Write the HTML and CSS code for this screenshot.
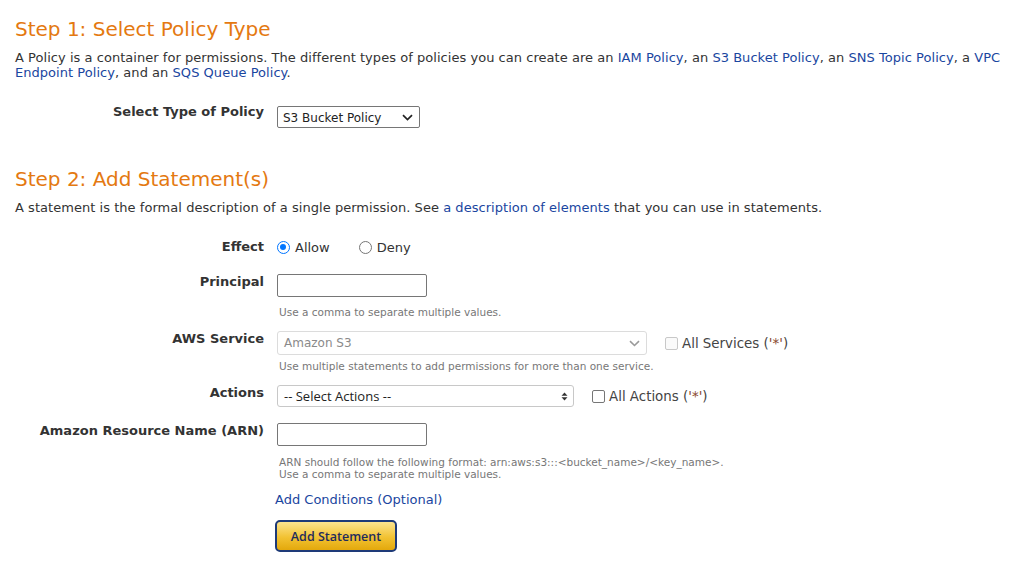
FILE: index.html
```html
<!DOCTYPE html>
<html>
<head>
<meta charset="utf-8">
<link rel="stylesheet" href="styles.css">
</head>
<body>
<div class="page">
  <h2 class="step">Step 1: Select Policy Type</h2>
  <p class="intro">A Policy is a container for permissions. The different types of policies you can create are an <a href="#">IAM Policy</a>, an <a href="#">S3 Bucket Policy</a>, an <a href="#">SNS Topic Policy</a>, a <a href="#">VPC Endpoint Policy</a>, and an <a href="#">SQS Queue Policy</a>.</p>

  <div class="row row-type">
    <div class="label">Select Type of Policy</div>
    <div class="control">
      <div class="select select-type">
        <span class="sel-text">S3 Bucket Policy</span>
        <svg class="chev" width="11" height="7" viewBox="0 0 11 7"><path d="M1 1.2 L5.5 5.5 L10 1.2" fill="none" stroke="#222" stroke-width="1.7"/></svg>
      </div>
    </div>
  </div>

  <h2 class="step step2">Step 2: Add Statement(s)</h2>
  <p class="intro">A statement is the formal description of a single permission. See <a href="#">a description of elements</a> that you can use in statements.</p>

  <div class="form">
    <div class="row row-effect">
      <div class="label">Effect</div>
      <div class="control radios">
        <label class="radio"><span class="rb checked"></span>Allow</label>
        <label class="radio"><span class="rb"></span>Deny</label>
      </div>
    </div>

    <div class="row row-principal">
      <div class="label">Principal</div>
      <div class="control">
        <div class="input"></div>
        <div class="help">Use a comma to separate multiple values.</div>
      </div>
    </div>

    <div class="row row-service">
      <div class="label">AWS Service</div>
      <div class="control">
        <div class="line">
          <div class="select select-service">
            <span class="sel-text">Amazon S3</span>
            <svg class="chev" width="11" height="7" viewBox="0 0 11 7"><path d="M1 1.2 L5.5 5.5 L10 1.2" fill="none" stroke="#9a9a9a" stroke-width="1.6"/></svg>
          </div>
          <label class="check disabled"><span class="cb"></span>All Services (<span class="q">'*'</span>)</label>
        </div>
        <div class="help">Use multiple statements to add permissions for more than one service.</div>
      </div>
    </div>

    <div class="row row-actions">
      <div class="label">Actions</div>
      <div class="control">
        <div class="line">
          <div class="select select-actions">
            <span class="sel-text">-- Select Actions --</span>
            <svg class="updown" width="7" height="9" viewBox="0 0 7 9"><path d="M3.5 0.5 L6.5 3.8 L0.5 3.8 Z M3.5 8.5 L6.5 5.2 L0.5 5.2 Z" fill="#333"/></svg>
          </div>
          <label class="check"><span class="cb"></span>All Actions (<span class="q">'*'</span>)</label>
        </div>
      </div>
    </div>

    <div class="row row-arn">
      <div class="label">Amazon Resource Name (ARN)</div>
      <div class="control">
        <div class="input"></div>
        <div class="help help-arn">ARN should follow the following format: arn:aws:s3:::&lt;bucket_name&gt;/&lt;key_name&gt;.<br>Use a comma to separate multiple values.</div>
      </div>
    </div>

    <div class="row row-cond">
      <div class="label"></div>
      <div class="control control-wide">
        <a href="#" class="cond">Add Conditions (Optional)</a>
        <button class="btn">Add Statement</button>
      </div>
    </div>
  </div>
</div>
</body>
</html>
```

FILE: styles.css
```css
html, body {
  margin: 0;
  padding: 0;
  background: #fff;
}
body {
  font-family: "DejaVu Sans", Verdana, sans-serif;
  font-size: 13px;
  color: #333;
}
.page {
  padding: 14px 15px 0 15px;
}
a {
  color: #1a46a0;
  text-decoration: none;
}
.step {
  margin: 0;
  font-weight: normal;
  font-size: 20px;
  line-height: 30px;
  color: #e47911;
}
.step2 {
  margin-top: 36px;
}
.intro {
  margin: 6px 0 0 0;
  line-height: 15px;
  letter-spacing: 0.04px;
}
.row {
  display: grid;
  grid-template-columns: 249px auto;
  column-gap: 13px;
}
.label {
  text-align: right;
  font-weight: bold;
  line-height: 16px;
}
.row-type {
  margin-top: 24px;
}
.select {
  position: relative;
  box-sizing: border-box;
  display: flex;
  align-items: center;
  height: 22px;
  border: 1px solid #767676;
  border-radius: 2px;
  padding: 0 6px 0 5px;
  font-size: 12px;
}
.sel-text {
  flex: 1;
  white-space: nowrap;
}
.select-type {
  width: 143px;
  height: 22px;
  margin-top: 2px;
}
.select-type .sel-text {
  color: #222;
  padding-top: 2px;
}
.form {
  margin-top: 23px;
}
.row-effect .label {
  line-height: 18px;
}
.radios {
  display: flex;
  align-items: center;
  height: 18px;
}
.radio {
  display: flex;
  align-items: center;
  margin-right: 29px;
}
.rb {
  box-sizing: border-box;
  width: 13px;
  height: 13px;
  border-radius: 50%;
  border: 1px solid #767676;
  margin: 0 5px 0 0;
  background: #fff;
  position: relative;
}
.rb.checked {
  border: 1.5px solid #0075ff;
}
.rb.checked::after {
  content: "";
  position: absolute;
  left: 2px;
  top: 2px;
  width: 6px;
  height: 6px;
  border-radius: 50%;
  background: #0075ff;
}
.row-principal {
  margin-top: 18px;
}
.input {
  box-sizing: border-box;
  width: 150px;
  height: 23px;
  border: 1px solid #767676;
  border-radius: 2px;
}
.help {
  font-size: 10.5px;
  color: #777;
  line-height: 12px;
  margin-top: 9px;
  margin-left: 2px;
}
.row-service {
  margin-top: 13px;
}
.line {
  display: flex;
  align-items: center;
}
.select-service {
  width: 370px;
  height: 24px;
  border: 1px solid #dcdcdc;
  border-radius: 3px;
  padding: 0 6px;
}
.select-service .sel-text {
  color: #8a8a8a;
}
.row-service .help {
  margin-top: 5px;
}
.check {
  display: flex;
  align-items: center;
  margin-left: 18px;
  color: #444;
  font-size: 13.4px;
}
.check .q {
  color: #8a4a30;
}
.cb {
  box-sizing: border-box;
  width: 13px;
  height: 13px;
  border: 1px solid #767676;
  border-radius: 2px;
  margin-right: 4px;
  background: #fff;
}
.check.disabled .cb {
  border-color: #c8c8c8;
  background: #fafafa;
}
.row-actions {
  margin-top: 13px;
}
.select-actions {
  width: 297px;
  height: 22px;
  border: 1px solid #c8c8c8;
  border-radius: 3px;
  padding: 0 5px 0 6px;
  font-family: "Open Sans", "DejaVu Sans", sans-serif;
  font-size: 13px;
}
.select-actions .sel-text {
  color: #222;
}
.row-arn {
  margin-top: 16px;
}
.row-arn .help {
  margin-top: 10px;
}
.row-cond {
  margin-top: 12px;
}
.control-wide {
  margin-left: -2px;
}
.cond {
  display: block;
  font-size: 13px;
  line-height: 16px;
}
.btn {
  display: block;
  margin-top: 12px;
  box-sizing: border-box;
  width: 122px;
  height: 32px;
  border: 2px solid #1e3a78;
  border-radius: 5px;
  background: linear-gradient(#fce48f, #f2c232 55%, #e3a80c);
  font-family: "Open Sans", "DejaVu Sans", sans-serif;
  font-weight: 600;
  font-size: 12.5px;
  color: #1f2b5e;
  padding: 0;
  cursor: pointer;
}
```
